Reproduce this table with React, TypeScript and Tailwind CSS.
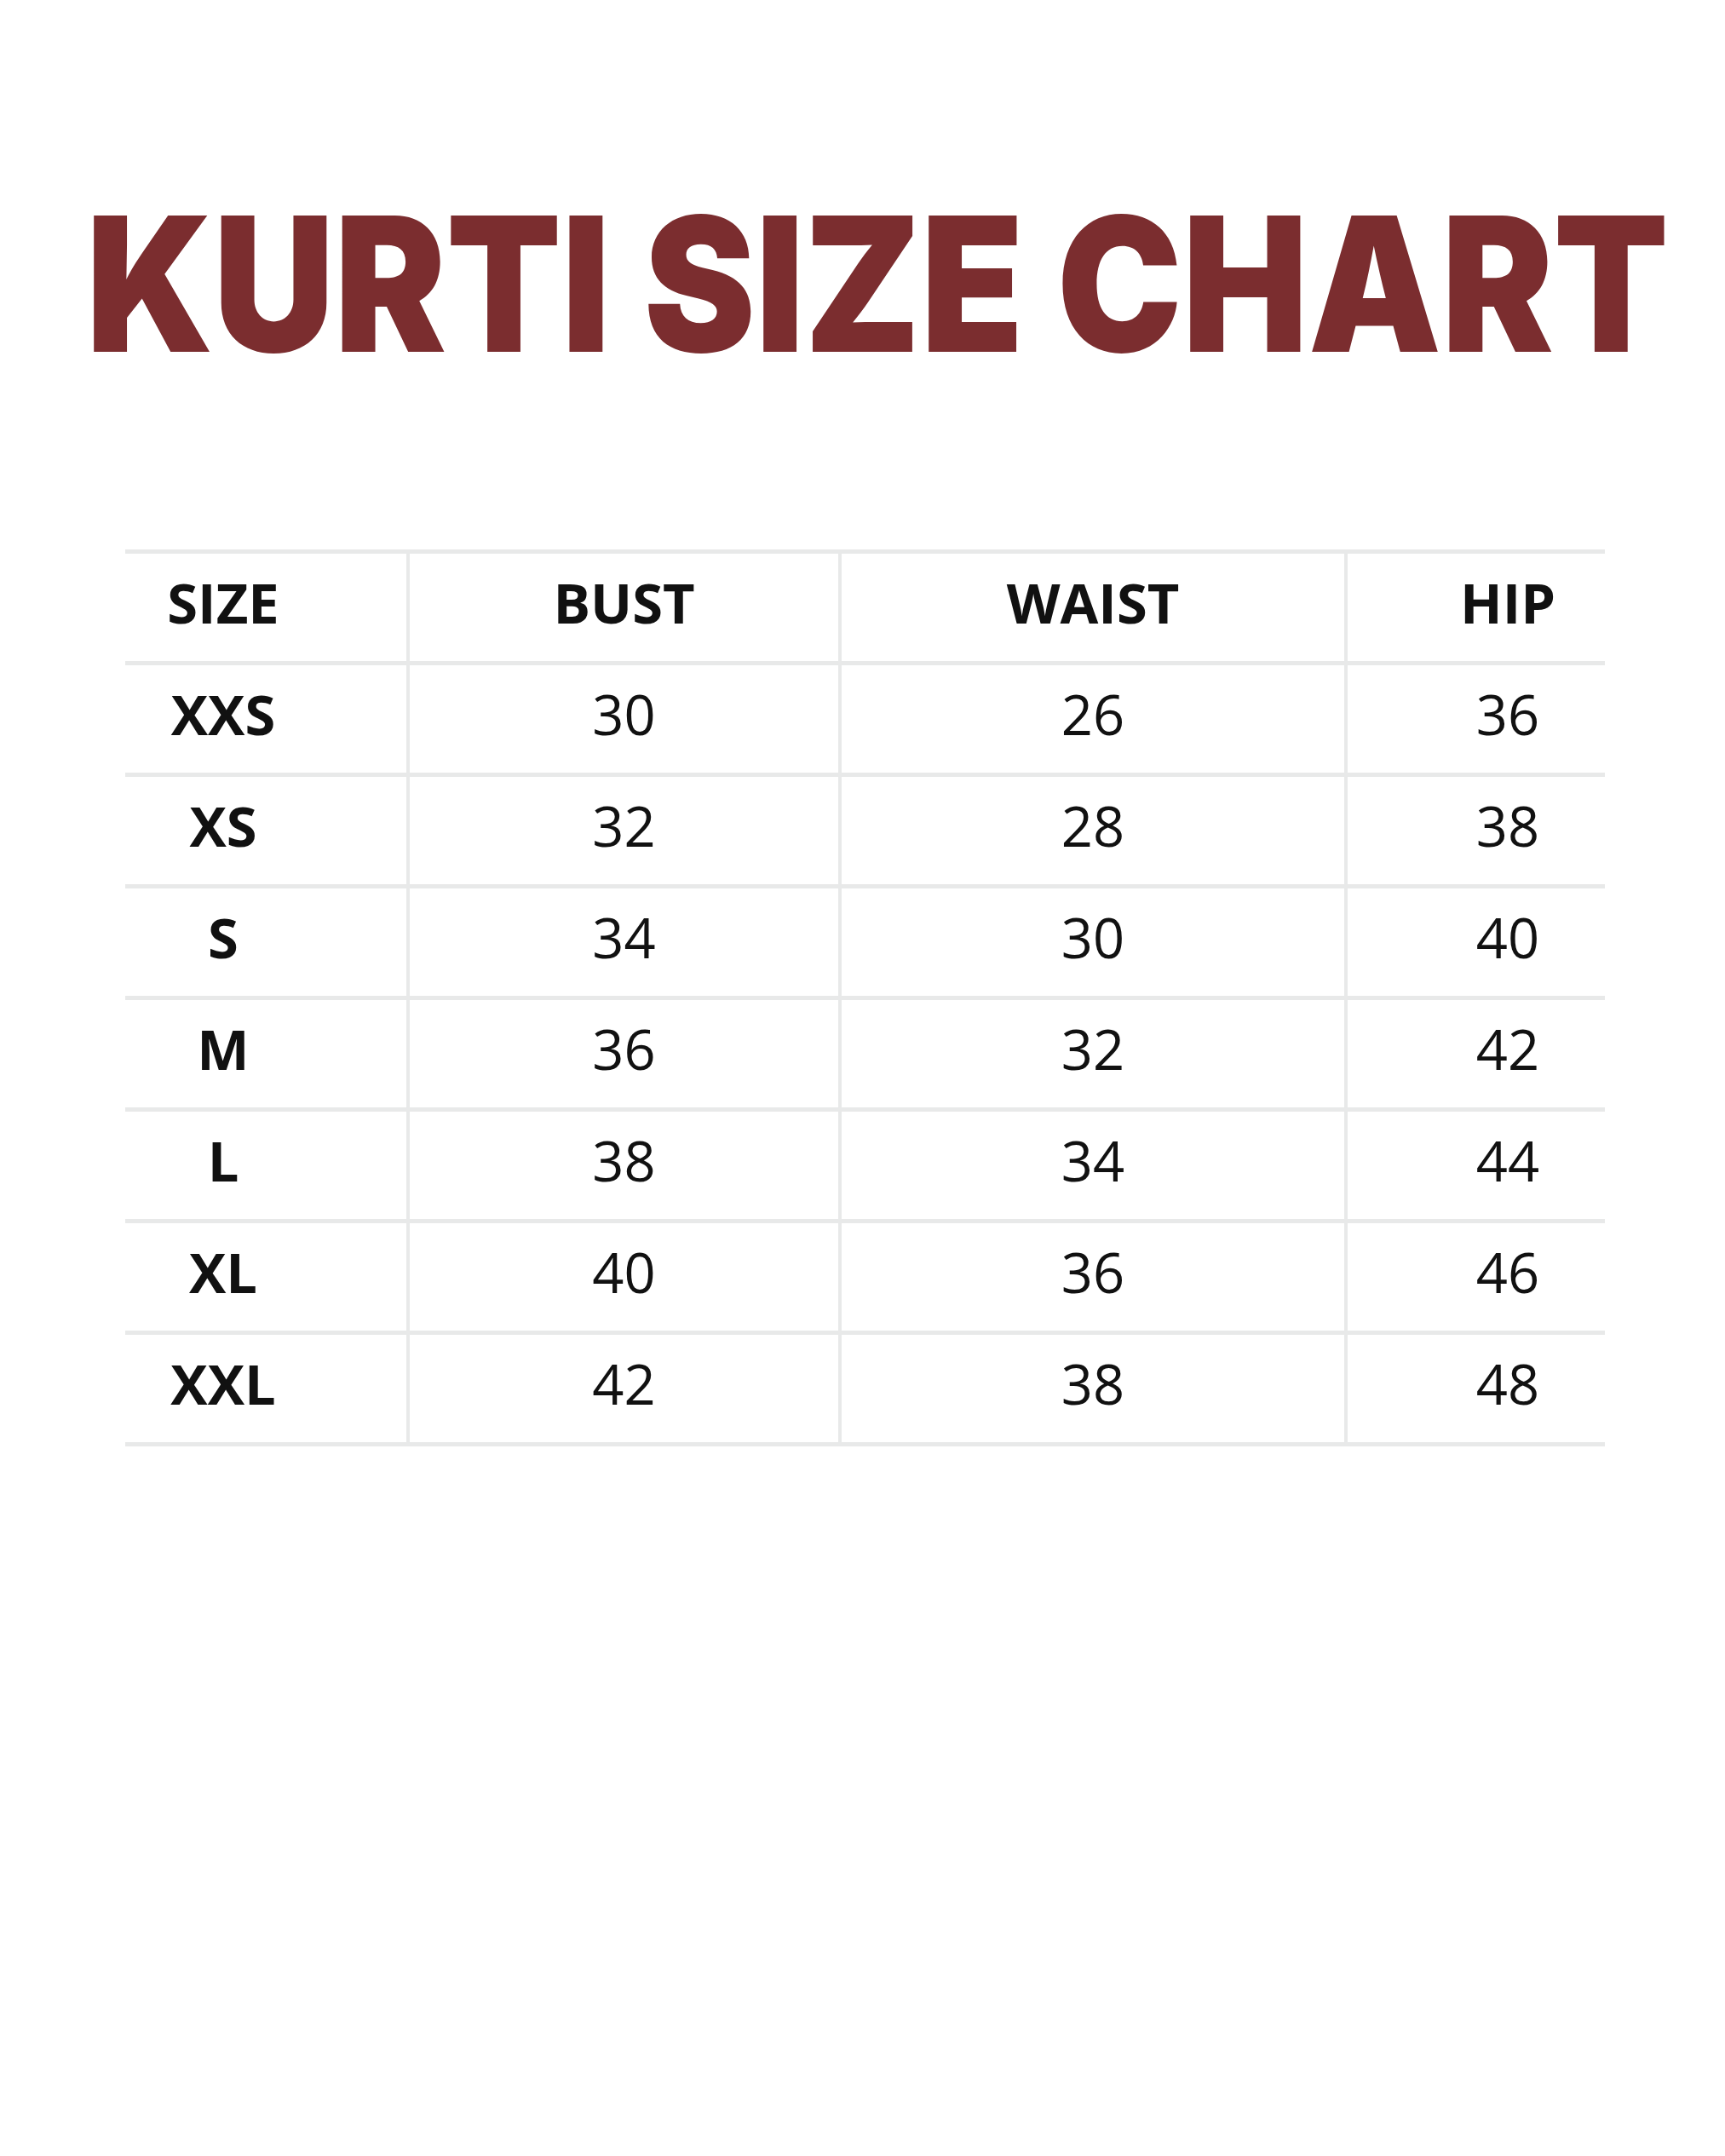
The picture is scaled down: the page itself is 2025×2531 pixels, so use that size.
const rows = [
  ['XXS', '30', '26', '36'],
  ['XS', '32', '28', '38'],
  ['S', '34', '30', '40'],
  ['M', '36', '32', '42'],
  ['L', '38', '34', '44'],
  ['XL', '40', '36', '46'],
  ['XXL', '42', '38', '48'],
];

const Row = ({ cells, head = false }: { cells: string[]; head?: boolean }) => (
  <div
    className={`grid h-[131px] grid-cols-[334px_507px_594px_302px] border-b-[5px] border-[#e8e9e9] text-[65px] leading-none text-[#111] ${
      head ? 'font-bold' : 'font-normal'
    }`}
  >
    <div className="flex items-center justify-center border-r-[4px] border-[#e8e9e9] pb-[12px] pr-[100px] font-bold">{cells[0]}</div>
    <div className="flex items-center justify-center border-r-[4px] border-[#e8e9e9] pb-[12px]">{cells[1]}</div>
    <div className="flex items-center justify-center border-r-[4px] border-[#e8e9e9] pb-[12px]">{cells[2]}</div>
    <div className="flex items-center justify-center pb-[12px] pl-[74px]">{cells[3]}</div>
  </div>
);

export default function App() {
  return (
    <div className="h-[2531px] w-[2025px] bg-white font-['Open_Sans',sans-serif]">
      <h1 className="whitespace-nowrap pt-[223px] text-center font-['Inter',sans-serif] text-[220px] font-black leading-none text-[#7b2d2f]">
        <span className="inline-block translate-x-[-8px] scale-x-[0.895]">KURTI SIZE CHART</span>
      </h1>
      <div className="ml-[147px] mt-[202px] w-[1737px] border-t-[5px] border-[#e8e9e9]">
        <Row cells={['SIZE', 'BUST', 'WAIST', 'HIP']} head />
        {rows.map((r) => (
          <Row key={r[0]} cells={r} />
        ))}
      </div>
    </div>
  );
}
